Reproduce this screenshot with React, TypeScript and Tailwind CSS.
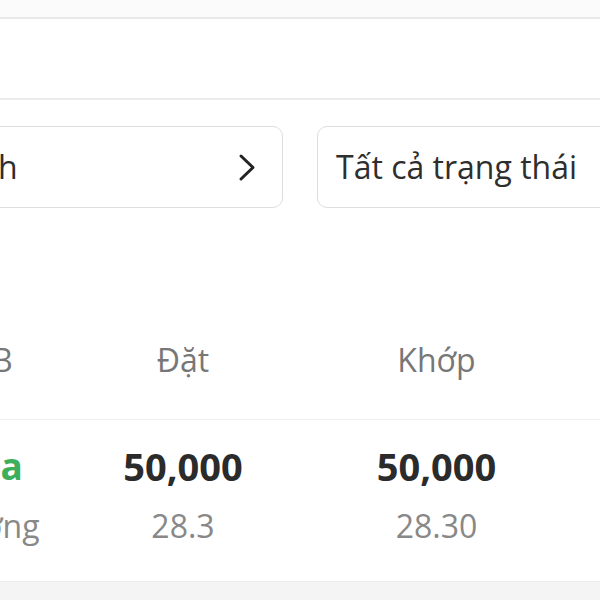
import { FC } from 'react';

interface OrderRow {
  side: string;
  type: string;
  placed: string;
  placedPrice: string;
  matched: string;
  matchedPrice: string;
}

const rows: OrderRow[] = [
  { side: 'Mua', type: 'Thường', placed: '50,000', placedPrice: '28.3', matched: '50,000', matchedPrice: '28.30' },
];

const Chevron: FC = () => (
  <svg width="20" height="30" viewBox="0 0 20 30" fill="none" stroke="#222" strokeWidth="3" strokeLinecap="round" strokeLinejoin="round">
    <path d="M4 4 L16 15.5 L4 27" />
  </svg>
);

const App: FC = () => {
  return (
    <div className="w-[600px] h-[600px] overflow-hidden bg-white font-['Open_Sans','Noto_Sans',sans-serif]">
      {/* Top bars */}
      <div className="h-[17px] bg-[#fbfbfb]" />
      <div className="h-[2px] bg-[#e9e9e9]" />
      <div className="h-[79px] bg-white" />
      <div className="h-[2px] bg-[#ebebeb]" />

      {/* Filters */}
      <div className="flex gap-[34px] -ml-[20px] mt-[26px]">
        <div className="w-[303px] h-[82px] shrink-0 flex items-center justify-between rounded-[10px] border border-[#dedede] pl-[17px] pr-[25px]">
          <span className="text-[32px] text-[#2e2e2e]">h</span>
          <Chevron />
        </div>
        <div className="w-[320px] h-[82px] shrink-0 flex items-center rounded-[10px] border border-[#dedede] pl-[18px]">
          <span className="text-[32px] text-[#2e2e2e] whitespace-nowrap">Tất cả trạng thái</span>
        </div>
      </div>

      {/* Table header */}
      <div className="-ml-[92px] mt-[130px] grid grid-cols-[148px_254px_253px_1fr] pb-[37px] border-b border-[#eeeeee] text-[32px] leading-[44px] text-[#777777]">
        <div className="text-center whitespace-nowrap">M/B</div>
        <div className="text-center">Đặt</div>
        <div className="text-center">Khớp</div>
        <div />
      </div>

      {/* Rows */}
      {rows.map((row) => (
        <div key={row.placed} className="-ml-[92px] grid grid-cols-[148px_254px_253px_1fr] pt-[22px] pb-[33px]">
          <div className="flex flex-col items-center whitespace-nowrap">
            <span className="text-[37px] leading-[48px] font-bold text-[#3dae5c]">{row.side}</span>
            <span className="mt-[14px] text-[32px] leading-[44px] text-[#888888]">{row.type}</span>
          </div>
          <div className="flex flex-col items-center">
            <span className="text-[38px] leading-[48px] font-bold text-[#2b2b2b]">{row.placed}</span>
            <span className="mt-[14px] text-[32px] leading-[44px] text-[#888888]">{row.placedPrice}</span>
          </div>
          <div className="flex flex-col items-center">
            <span className="text-[38px] leading-[48px] font-bold text-[#2b2b2b]">{row.matched}</span>
            <span className="mt-[14px] text-[32px] leading-[44px] text-[#888888]">{row.matchedPrice}</span>
          </div>
          <div />
        </div>
      ))}

      {/* Next card */}
      <div className="h-[40px] bg-[#f4f4f4] border-t border-[#ececec]" />
    </div>
  );
};

export default App;
